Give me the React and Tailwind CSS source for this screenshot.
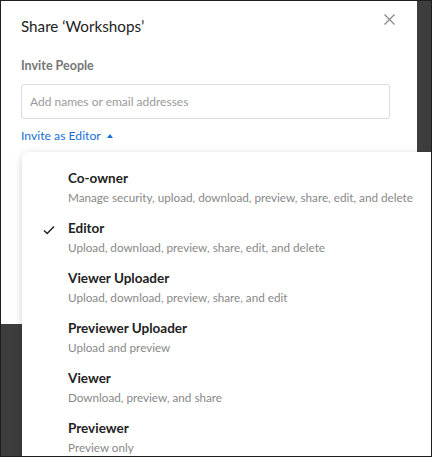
import React from 'react';

const roles = [
    { name: 'Co-owner', desc: 'Manage security, upload, download, preview, share, edit, and delete' },
    { name: 'Editor', desc: 'Upload, download, preview, share, edit, and delete', checked: true },
    { name: 'Viewer Uploader', desc: 'Upload, download, preview, share, and edit' },
    { name: 'Previewer Uploader', desc: 'Upload and preview' },
    { name: 'Viewer', desc: 'Download, preview, and share' },
    { name: 'Previewer', desc: 'Preview only' },
];

const App = () => {
    return (
        <div className="relative w-[432px] h-[457px] overflow-hidden bg-[#3d3d3d] border border-[#1e1e1e]" style={{ fontFamily: 'Lato, "Open Sans", sans-serif' }}>
            {/* Modal */}
            <div className="w-[416px] h-[323px] bg-white pl-5 pr-[22px] pt-[12px]">
                <div className="flex items-start justify-between">
                    <h1 className="text-[15.2px] leading-[26px] text-[#222]">Share ‘Workshops’</h1>
                    <button className="mt-[1px] text-[#8a8a8a]">
                        <svg width="11" height="11" viewBox="0 0 11 11" fill="none" stroke="currentColor" strokeWidth="1.3">
                            <path d="M0.5 0.5L10.5 10.5M10.5 0.5L0.5 10.5" />
                        </svg>
                    </button>
                </div>

                <div className="mt-[17px] text-[12.5px] font-bold text-[#767676] leading-[20px]">Invite People</div>

                <div className="mt-[8px] mr-[5px] h-[35px] border border-[#dcdcdc] rounded-[3px] flex items-center px-[8px] text-[12px] text-[#9a9a9a]">
                    Add names or email addresses
                </div>

                <div className="mt-[7px] flex items-center gap-[6px] text-[12.2px] text-[#1a6fd6] leading-[20px]">
                    Invite as Editor
                    <svg width="6" height="4" viewBox="0 0 6 4"><path d="M0 4L3 0L6 4Z" fill="currentColor" /></svg>
                </div>
            </div>

            {/* Dropdown menu */}
            <div className="absolute top-[151px] left-[21px] w-[440px] bg-white rounded-[6px] shadow-[0_2px_8px_rgba(0,0,0,0.18)] pt-[16px]">
                {roles.map((r) => (
                    <div key={r.name} className="relative pl-[46px] h-[50px]">
                        {r.checked && (
                            <svg className="absolute left-[21px] top-[7px]" width="12" height="10" viewBox="0 0 12 10" fill="none" stroke="#222" strokeWidth="1.5">
                                <path d="M1 5.5L4.2 8.5L11 1.5" />
                            </svg>
                        )}
                        <div className="text-[13.5px] font-bold text-[#222] leading-[20px]">{r.name}</div>
                        <div className="text-[11.7px] text-[#888] leading-[17px] mt-[1px]">{r.desc}</div>
                    </div>
                ))}
            </div>
        </div>
    );
};

export default App;
